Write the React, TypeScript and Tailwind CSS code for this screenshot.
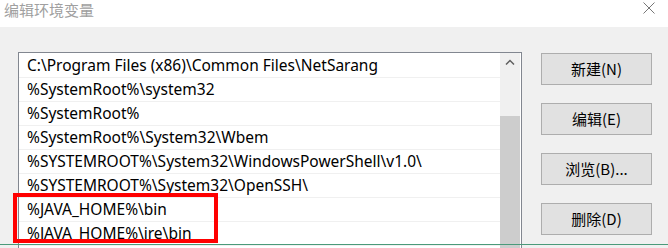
const paths = [
  "C:\\Program Files (x86)\\Common Files\\NetSarang",
  "%SystemRoot%\\system32",
  "%SystemRoot%",
  "%SystemRoot%\\System32\\Wbem",
  "%SYSTEMROOT%\\System32\\WindowsPowerShell\\v1.0\\",
  "%SYSTEMROOT%\\System32\\OpenSSH\\",
  "%JAVA_HOME%\\bin",
  "%JAVA_HOME%\\jre\\bin",
];

const buttons = ["新建(N)", "编辑(E)", "浏览(B)...", "删除(D)"];

export default function App() {
  return (
    <div className="relative w-[668px] h-[248px] overflow-hidden bg-[#f0f0f0] font-['Noto_Sans','Noto_Sans_CJK_SC',sans-serif] text-black">
      {/* title bar */}
      <div className="h-[27px] bg-white flex items-start justify-between">
        <span className="pl-[4px] pt-[1px] text-[15px] leading-[18px] text-[#a0a0a0] font-['Noto_Sans_CJK_SC',sans-serif]">
          编辑环境变量
        </span>
        <svg className="mt-[2px] mr-[13px]" width="12" height="12" viewBox="0 0 12 12">
          <path d="M0.5 0.5 L11.5 11.5 M11.5 0.5 L0.5 11.5" stroke="#777" strokeWidth="1" fill="none" />
        </svg>
      </div>

      <div className="flex pl-[18px] pt-[25px]">
        {/* list box */}
        <div className="w-[504px] h-[230px] border border-[#828790] bg-white flex">
          <div className="w-[481px] pt-[1px]">
            {paths.map((p) => (
              <div
                key={p}
                className="h-[24px] border-b border-[#f0f0f0] pl-[8px] flex items-center text-[15.5px] whitespace-nowrap"
              >
                {p}
              </div>
            ))}
          </div>
          <div className="w-[20px] bg-[#f0f0f0] flex flex-col">
            <div className="h-[17px] flex items-center justify-center">
              <svg width="10" height="6" viewBox="0 0 10 6">
                <path d="M1 5.5 L5 1.5 L9 5.5" stroke="#606060" strokeWidth="1.5" fill="none" />
              </svg>
            </div>
            <div className="mt-[46px] flex-1 bg-[#cdcdcd]" />
          </div>
          <div className="w-[1px]" />
        </div>

        {/* buttons */}
        <div className="ml-[19px] pt-[1px] flex flex-col gap-[18px]">
          {buttons.map((b) => (
            <div
              key={b}
              className="w-[111px] h-[32px] border border-[#adadad] bg-[#e1e1e1] flex items-center justify-center text-[15px] font-['Noto_Sans_CJK_SC',sans-serif]"
            >
              {b}
            </div>
          ))}
        </div>
      </div>

      {/* highlight annotation */}
      <div className="absolute left-[13px] top-[193px] w-[205px] h-[50px] border-[4px] border-[#ff0000]" />
      <div className="absolute left-0 bottom-[3px] w-full h-[1px] bg-[#4a9a7a]" />
    </div>
  );
}
